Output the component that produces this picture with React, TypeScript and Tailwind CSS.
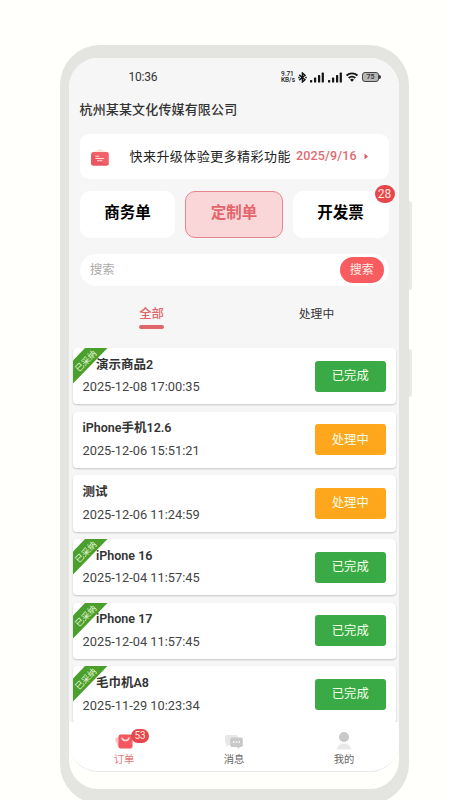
import type { ReactNode } from "react";
import { clsx } from "clsx";

type OrderStatus = "done" | "processing";

interface Order {
  name: string;
  date: string;
  status: OrderStatus;
  accepted?: boolean;
}

const ORDERS: Order[] = [
  { name: "演示商品2", date: "2025-12-08 17:00:35", status: "done", accepted: true },
  { name: "iPhone手机12.6", date: "2025-12-06 15:51:21", status: "processing" },
  { name: "测试", date: "2025-12-06 11:24:59", status: "processing" },
  { name: "iPhone 16", date: "2025-12-04 11:57:45", status: "done", accepted: true },
  { name: "iPhone 17", date: "2025-12-04 11:57:45", status: "done", accepted: true },
  { name: "毛巾机A8", date: "2025-11-29 10:23:34", status: "done", accepted: true },
];

const STATUS_META: Record<OrderStatus, { label: string; className: string }> = {
  done: { label: "已完成", className: "bg-[#39aa46]" },
  processing: { label: "处理中", className: "bg-[#ffa71c]" },
};

function SignalIcon() {
  return (
    <svg width="14" height="11" viewBox="0 0 14 11" fill="#151515">
      <rect x="0" y="8" width="2.2" height="2.6" rx="0.6" />
      <rect x="4" y="5.6" width="2.2" height="5" rx="0.6" />
      <rect x="8" y="3.1" width="2.2" height="7.5" rx="0.6" />
      <rect x="11.7" y="0.6" width="2.2" height="10" rx="0.6" />
    </svg>
  );
}

function StatusBar() {
  return (
    <div className="flex h-[38px] items-center pl-[59.5px] pr-[18px] text-[#333]">
      <span className="text-[12px] leading-none tracking-[-0.2px]">10:36</span>
      <div className="ml-auto flex items-center">
        <div className="flex flex-col text-[6.5px] font-medium leading-[6.5px] text-[#222]">
          <span className="block h-[6.5px]">9.71</span>
          <span className="block h-[6.5px]">KB/s</span>
        </div>
        {/* Bluetooth */}
        <svg className="ml-[3px]" width="9" height="11" viewBox="0 0 9 11" fill="none" stroke="#151515" strokeWidth="1.4">
          <path d="M1.2 2.9 7 7.7 4.4 10V1L7 3.3 1.2 8.1" />
          <path d="M.2 5.5h1.5M7.2 5.5h1.5" strokeWidth="1.4" />
        </svg>
        <span className="ml-[3px]"><SignalIcon /></span>
        <span className="ml-[4px]"><SignalIcon /></span>
        <svg className="ml-[4px]" width="12" height="10" viewBox="0 0 12 10" fill="none" stroke="#151515" strokeWidth="1.8">
          <path d="M.6 3.5a7.7 7.7 0 0 1 10.8 0M2.7 6a4.8 4.8 0 0 1 6.6 0" />
          <path d="M4 7.7a3 3 0 0 1 4 0L6 9.8Z" fill="#151515" stroke="none" />
        </svg>
        <div className="ml-[4px] flex h-[10px] w-[17px] items-center justify-center rounded-[3px] border border-[#444] bg-[#b7b7b7] text-[7px] font-semibold leading-none text-[#333]">
          75
        </div>
        <span className="h-[4px] w-[2px] rounded-r bg-[#333]" />
      </div>
    </div>
  );
}

function UpgradeBanner() {
  return (
    <div className="mx-[10.5px] flex h-[45px] items-center rounded-[9px] bg-white pl-[11px]">
      <svg width="18" height="18" viewBox="0 0 18 18">
        <path d="M1 5 9 .8 17 5Z" fill="#fde3d9" />
        <rect x="0.2" y="4" width="17.6" height="13.5" rx="2" fill="#f2606a" />
        <path d="M.2 6v9.5c0 1.2.8 2 2 2h13.4c1.2 0 2-.8 2-2L14 16Z" fill="#e95662" />
        <path d="M4.4 8.3h3.7M4.4 10.5h8.4M6 12.7h5.4" stroke="#ffe0df" strokeWidth="1.1" />
      </svg>
      <span className="ml-[21px] whitespace-nowrap text-[13px] leading-none tracking-[0.45px] text-[#222]">快来升级体验更多精彩功能</span>
      <span className="ml-[5px] whitespace-nowrap text-[12.5px] font-medium leading-none tracking-[0.15px] text-[#df6a70]">2025/9/16</span>
      <svg className="ml-[7px]" width="5" height="7" viewBox="0 0 5 7">
        <path d="M.5.4 4 3.5.5 6.6Z" fill="#df5961" />
      </svg>
    </div>
  );
}

function TypeTab({ label, active, badge }: { label: string; active?: boolean; badge?: number }) {
  return (
    <div
      className={clsx(
        "relative flex h-[47px] w-full items-center justify-center rounded-[10px] pb-[2px] text-[15.5px] font-bold",
        active ? "border border-[#e8858c] bg-[#f9d6d8] text-[#e4656c]" : "bg-white text-black"
      )}
    >
      {label}
      {badge !== undefined && (
        <span className="absolute -right-[6px] -top-[6px] flex h-[18px] w-5 items-center justify-center rounded-full bg-[#e5484c] text-[12px] font-normal leading-none text-[#ffe3dc]">
          {badge}
        </span>
      )}
    </div>
  );
}

function OrderCard({ order }: { order: Order }) {
  const status = STATUS_META[order.status];

  return (
    <div className="relative flex h-[56.3px] shrink-0 items-center overflow-hidden rounded-[4px] bg-white pl-[10px] pr-[10.5px] shadow-[0_1px_2px_rgba(0,0,0,0.2)]">
      {/* Accepted ribbon */}
      {order.accepted && (
        <svg className="absolute left-0 top-0" width="35" height="36" viewBox="0 0 35 36">
          <path d="M12 0H34.5L0 35.5V12.5Z" fill="#4b9f2c" />
          <text
            x="12.8"
            y="16"
            transform="rotate(-45 12.8 13)"
            textAnchor="middle"
            fontSize="8.6"
            fill="#e6f6d5"
          >
            已采纳
          </text>
        </svg>
      )}
      <div className="flex-1 whitespace-nowrap">
        <div className={clsx("text-[12.5px] font-semibold leading-[22.5px] text-[#333]", order.accepted && "pl-[13.5px]")}>
          {order.name}
        </div>
        <div className="text-[12.8px] leading-[22.5px] text-[#444]">{order.date}</div>
      </div>
      <div className={clsx("flex h-[31px] w-[70.5px] items-center justify-center rounded-[3px] text-[12.3px] text-[#f6ffe9]", status.className)}>
        {status.label}
      </div>
    </div>
  );
}

function NavItem({ label, active, badge, children }: { label: string; active?: boolean; badge?: number; children: ReactNode }) {
  return (
    <div className={clsx("flex flex-1 flex-col items-center pt-[9px]", active ? "text-[#e4767b]" : "text-[#666]")}>
      <div className="relative h-[20px] w-[20px]">
        {children}
        {badge !== undefined && (
          <span className="absolute -top-[2px] left-[17px] flex h-[14px] w-[18px] items-center justify-center rounded-full bg-[#e5484c] text-[10px] leading-none text-[#ffe3dc]">
            {badge}
          </span>
        )}
      </div>
      <span className="mt-[3px] text-[10.3px] leading-[11px]">{label}</span>
    </div>
  );
}

export default function App() {
  return (
    <div className="flex h-[800px] w-[450px] items-start overflow-hidden bg-[#fffffb] pl-[60px] pt-[45px] font-['Roboto','Noto_Sans_CJK_SC',sans-serif]">
      <div className="h-[759px] w-[348.5px] shrink-0 rounded-[40px] bg-[#e4e4e1] pl-[9px] pr-[9.5px] pt-[13px]">
        <div className="h-[731px] overflow-hidden rounded-[29px] bg-[#fffffb]">
          <div className="flex h-[714px] flex-col overflow-hidden rounded-[29px] border-b border-[#e9e9e9] bg-[#f6f6f7]">
            <StatusBar />
            <h1 className="h-[38px] pl-[10.5px] pt-[2.5px] text-[13px] font-medium leading-[22px] tracking-[0.15px] text-[#333]">
              杭州某某文化传媒有限公司
            </h1>
            <UpgradeBanner />

            <div className="mx-[10.5px] mt-3 flex gap-[10px]">
              <TypeTab label="商务单" />
              <TypeTab label="定制单" active />
              <TypeTab label="开发票" badge={28} />
            </div>

            <div className="mx-[10.5px] mt-4 flex h-8 items-center rounded-full bg-white pl-[10.5px] pr-[4.5px]">
              <span className="flex-1 text-[12.3px] text-[#aaa]">搜索</span>
              <button className="h-[26px] w-[44.5px] rounded-full bg-[#f85c60] text-[12px] leading-none text-[#fff0e8]">搜索</button>
            </div>

            <div className="flex h-[62px] text-[12.3px] leading-[18px]">
              <div className="flex flex-1 flex-col items-center pt-[18.5px] font-medium text-[#e0656b]">
                全部
                <span className="mt-[2.5px] h-[3.5px] w-[25px] rounded-full bg-[#df676c]" />
              </div>
              <div className="flex-1 pt-[18.5px] text-center text-[11.8px] text-[#333]">处理中</div>
            </div>

            <div className="flex min-h-0 flex-1 flex-col gap-[7.4px] overflow-hidden pl-[3.5px] pr-[3px]">
              {ORDERS.map((order) => (
                <OrderCard key={order.name} order={order} />
              ))}
            </div>

            <div className="flex h-[49px] shrink-0 bg-white">
              <NavItem label="订单" active badge={53}>
                <svg width="20" height="20" viewBox="0 0 20 20">
                  <path d="M1 7.5 11 3v13H4Z" fill="#fbc0c0" />
                  <rect x="4.5" y="3.5" width="14" height="14" rx="2" fill="#f5595f" />
                  <path d="M8 7c.7 3.4 6.3 3.4 7 0" fill="none" stroke="#ffe2df" strokeWidth="1.4" strokeLinecap="round" />
                </svg>
              </NavItem>
              <NavItem label="消息">
                <svg width="20" height="20" viewBox="0 0 20 20">
                  <path d="M2.5 4H12a2 2 0 0 1 2 2v8H4.5L2 16l.3-3.5A2 2 0 0 1 1 11V5.5A1.5 1.5 0 0 1 2.5 4Z" fill="#e7e7e7" />
                  <path d="M8 6.5h9a1.8 1.8 0 0 1 1.8 1.8v6a1.8 1.8 0 0 1-1.8 1.8h-1L14.5 17.5 13 16.1H8a1.8 1.8 0 0 1-1.8-1.8v-6A1.8 1.8 0 0 1 8 6.5Z" fill="#c9c9cb" />
                  <path d="M9 11h1.4M11.8 11h1.4M14.6 11H16" stroke="#fff" strokeWidth="1.3" />
                </svg>
              </NavItem>
              <NavItem label="我的">
                <svg width="20" height="20" viewBox="0 0 20 20">
                  <path d="M3 18.5c.5-4 3-6 7-6s6.5 2 7 6Z" fill="#e9e9e9" />
                  <circle cx="10" cy="6" r="5" fill="#c8c8c9" />
                </svg>
              </NavItem>
            </div>
          </div>
        </div>
      </div>

      {/* Side buttons */}
      <div className="flex shrink-0 flex-col gap-[59px] pt-[156px]">
        <span className="h-[89px] w-[3px] rounded-r bg-[#e9e9e6]" />
        <span className="h-[48px] w-[3px] rounded-r bg-[#e9e9e6]" />
      </div>
    </div>
  );
}
